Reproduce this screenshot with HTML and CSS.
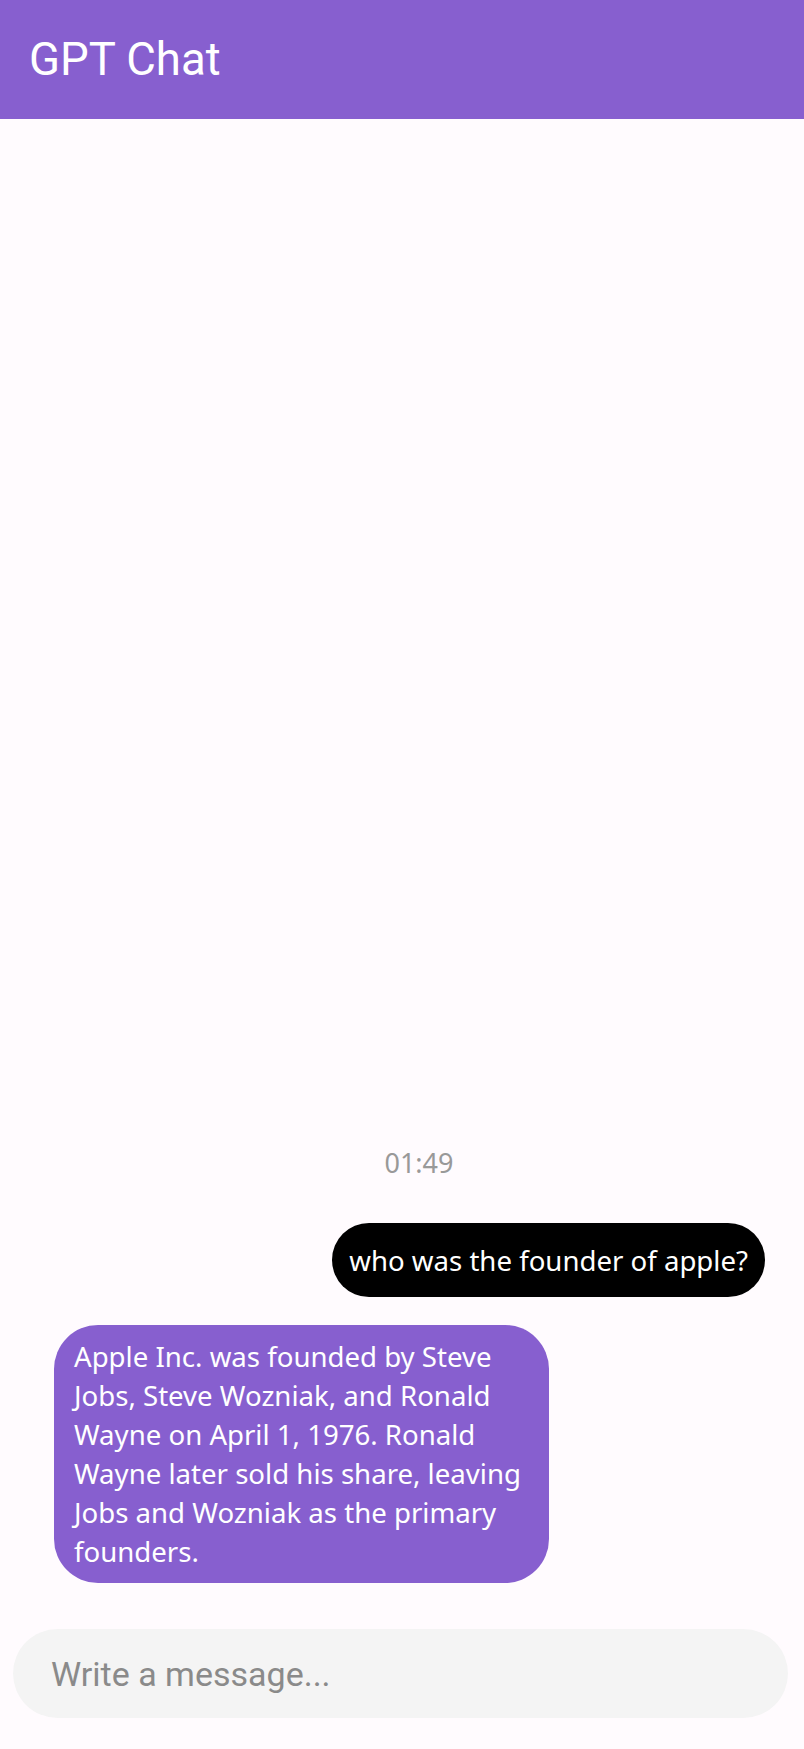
FILE: index.html
```html
<!DOCTYPE html>
<html lang="en">
<head>
<meta charset="utf-8">
<title>GPT Chat</title>
<link rel="stylesheet" href="styles.css">
</head>
<body>
<div class="app">
  <header class="topbar">
    <h1 class="title">GPT Chat</h1>
  </header>
  <main class="chat">
    <div class="stamp">01:49</div>
    <div class="row row-out">
      <div class="bubble bubble-out">who was the founder of apple?</div>
    </div>
    <div class="row row-in">
      <div class="bubble bubble-in">Apple Inc. was founded by Steve Jobs, Steve Wozniak, and Ronald Wayne on April 1, 1976. Ronald Wayne later sold his share, leaving Jobs and Wozniak as the primary founders.</div>
    </div>
  </main>
  <footer class="composer">
    <div class="input">Write a message...</div>
  </footer>
</div>
</body>
</html>
```
FILE: styles.css
```css
html, body {
  margin: 0;
  padding: 0;
  background: #fffbfe;
}
.app {
  width: 804px;
  height: 1749px;
  display: flex;
  flex-direction: column;
  background: #fffbfe;
}
.topbar {
  height: 119px;
  background: #875fcf;
  display: flex;
  align-items: center;
  padding-left: 29px;
  flex: none;
}
.title {
  margin: 0;
  font-family: Roboto, "Liberation Sans", sans-serif;
  font-weight: 400;
  font-size: 45.5px;
  color: #ffffff;
  line-height: 1;
}
.chat {
  flex: 1;
  display: flex;
  flex-direction: column;
  justify-content: flex-end;
  font-family: "Noto Sans", "Open Sans", sans-serif;
}
.stamp {
  text-align: center;
  padding-left: 34px;
  font-size: 27px;
  line-height: 40px;
  color: #999999;
  margin-bottom: 40px;
}
.row {
  display: flex;
}
.row-out {
  justify-content: flex-end;
  padding-right: 39px;
  margin-bottom: 28px;
}
.row-in {
  justify-content: flex-start;
  padding-left: 54px;
}
.bubble {
  font-size: 27.6px;
  color: #ffffff;
}
.bubble-out {
  background: #000000;
  border-radius: 37px;
  padding: 17px 17px;
  line-height: 40px;
  white-space: nowrap;
}
.bubble-in {
  background: #875fcf;
  border-radius: 44px;
  padding: 12px 20px;
  line-height: 39px;
  max-width: 455px;
}
.composer {
  flex: none;
  padding: 46px 16px 31px 13px;
}
.input {
  height: 89px;
  border-radius: 45px;
  background: #f4f4f4;
  display: flex;
  align-items: center;
  padding-left: 38px;
  font-family: Roboto, "Liberation Sans", sans-serif;
  font-size: 34px;
  color: #8a8a8a;
}
```
